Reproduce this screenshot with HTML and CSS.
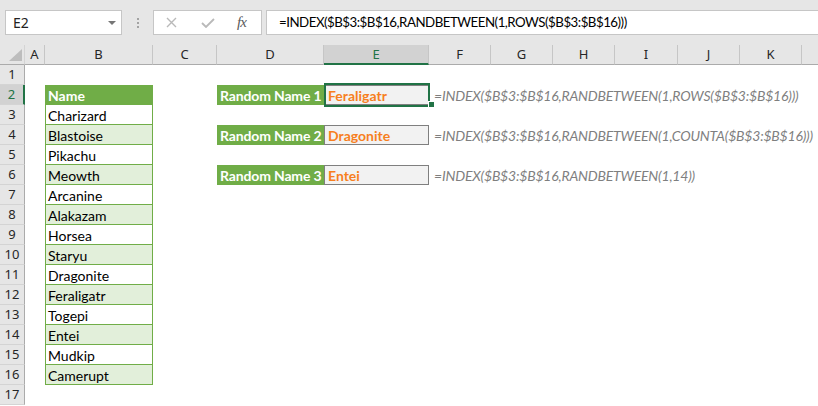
FILE: index.html
```html
<!DOCTYPE html>
<html>
<head>
<meta charset="utf-8">
<title>Random Name</title>
<link rel="stylesheet" href="styles.css">
</head>
<body>
<div class="toolbar">
  <div class="namebox"><span>E2</span><span class="dd"></span></div>
  <div class="grip"><i></i><i></i><i></i></div>
  <div class="fbtns">
    <svg class="ic-x" width="11" height="11" viewBox="0 0 11 11"><path d="M1 1L10 10M10 1L1 10" stroke="#b9b9b9" stroke-width="1.4" fill="none"/></svg>
    <svg class="ic-ok" width="14" height="10" viewBox="0 0 14 10"><path d="M1 5L5 9L13 1" stroke="#b9b9b9" stroke-width="1.8" fill="none"/></svg>
    <span class="ic-fx">fx</span>
  </div>
  <div class="fbar">=INDEX($B$3:$B$16,RANDBETWEEN(1,ROWS($B$3:$B$16)))</div>
</div>
<div class="sheet">
  <div class="row colhdr">
    <div class="corner"><svg width="13" height="12" viewBox="0 0 13 12"><path d="M13 0L13 12L0 12Z" fill="#bdbdbd"/></svg></div>
    <div class="ch">A</div><div class="ch">B</div><div class="ch">C</div><div class="ch">D</div><div class="ch sel">E</div><div class="ch">F</div><div class="ch">G</div><div class="ch">H</div><div class="ch">I</div><div class="ch">J</div><div class="ch">K</div><div class="ch last"></div>
  </div>
  <div class="row"><div class="rh">1</div></div>
  <div class="row"><div class="rh sel">2</div><div class="b hdr">Name</div><div class="d lbl">Random Name 1</div><div class="e out">Feraligatr<span class="selbox"></span><span class="handle"></span></div><div class="f">=INDEX($B$3:$B$16,RANDBETWEEN(1,ROWS($B$3:$B$16)))</div></div>
  <div class="row"><div class="rh">3</div><div class="b">Charizard</div></div>
  <div class="row"><div class="rh">4</div><div class="b alt">Blastoise</div><div class="d lbl">Random Name 2</div><div class="e out">Dragonite</div><div class="f">=INDEX($B$3:$B$16,RANDBETWEEN(1,COUNTA($B$3:$B$16)))</div></div>
  <div class="row"><div class="rh">5</div><div class="b">Pikachu</div></div>
  <div class="row"><div class="rh">6</div><div class="b alt">Meowth</div><div class="d lbl">Random Name 3</div><div class="e out">Entei</div><div class="f">=INDEX($B$3:$B$16,RANDBETWEEN(1,14))</div></div>
  <div class="row"><div class="rh">7</div><div class="b">Arcanine</div></div>
  <div class="row"><div class="rh">8</div><div class="b alt">Alakazam</div></div>
  <div class="row"><div class="rh">9</div><div class="b">Horsea</div></div>
  <div class="row"><div class="rh">10</div><div class="b alt">Staryu</div></div>
  <div class="row"><div class="rh">11</div><div class="b">Dragonite</div></div>
  <div class="row"><div class="rh">12</div><div class="b alt">Feraligatr</div></div>
  <div class="row"><div class="rh">13</div><div class="b">Togepi</div></div>
  <div class="row"><div class="rh">14</div><div class="b alt">Entei</div></div>
  <div class="row"><div class="rh">15</div><div class="b">Mudkip</div></div>
  <div class="row"><div class="rh">16</div><div class="b alt">Camerupt</div></div>
  <div class="row"><div class="rh">17</div></div>
</div>
</body>
</html>
```
FILE: styles.css
```css
html, body {
  margin: 0;
  padding: 0;
}
body {
  width: 818px;
  height: 406px;
  overflow: hidden;
  background: #ffffff;
  font-family: "Lato", "Liberation Sans", sans-serif;
}
.toolbar {
  display: flex;
  align-items: center;
  height: 45px;
  box-sizing: border-box;
  background: #e6e6e6;
  padding-left: 5px;
}
.namebox {
  width: 117px;
  height: 25px;
  box-sizing: border-box;
  border: 1px solid #c6c6c6;
  background: #ffffff;
  display: flex;
  align-items: center;
  justify-content: space-between;
  padding: 0 5px 0 7px;
  font-family: "Noto Sans", sans-serif;
  font-size: 14px;
  color: #222222;
}
.dd {
  width: 0;
  height: 0;
  border-left: 4px solid transparent;
  border-right: 4px solid transparent;
  border-top: 4px solid #767676;
}
.grip {
  width: 2px;
  margin: 0 14px 0 15px;
  display: flex;
  flex-direction: column;
  gap: 2px;
}
.grip i {
  display: block;
  width: 2px;
  height: 2px;
  background: #a3a3a3;
}
.fbtns {
  width: 109px;
  height: 25px;
  box-sizing: border-box;
  border: 1px solid #c6c6c6;
  background: #ffffff;
  display: flex;
  align-items: center;
}
.ic-x {
  margin-left: 12px;
}
.ic-ok {
  margin-left: 24px;
}
.ic-fx {
  margin-left: 22px;
  font-family: "Liberation Serif", serif;
  font-style: italic;
  font-size: 15px;
  color: #5a5a5a;
  letter-spacing: -1px;
}
.fbar {
  flex: 1;
  margin-left: 4px;
  height: 25px;
  box-sizing: border-box;
  border: 1px solid #c6c6c6;
  border-right: none;
  background: #ffffff;
  padding-left: 12px;
  font-family: "Lato", sans-serif;
  font-size: 13.3px;
  letter-spacing: -0.5px;
  line-height: 23px;
  color: #000000;
  white-space: nowrap;
}
.sheet {
  display: flex;
  flex-direction: column;
}
.row {
  display: grid;
  grid-template-columns: 25px 20px 108px 64px 107px 105px 62px 62px 62px 63px 62px 62px 16px;
  height: 20px;
}
.row > div {
  box-sizing: border-box;
  height: 20px;
}
.colhdr > div {
  background: #e6e6e6;
  border-right: 1px solid #c6c6c6;
  border-bottom: 1px solid #ababab;
  text-align: center;
  font-family: "Noto Sans", sans-serif;
  font-size: 13px;
  line-height: 19px;
  color: #262626;
}
.colhdr .corner {
  display: flex;
  align-items: flex-end;
  justify-content: flex-end;
  padding: 0 2px 3px 0;
  border-right: 1px solid #d4d4d4;
}
.colhdr .corner svg {
  display: block;
}
.colhdr .sel {
  background: #d2d2d2;
  border-bottom: 2px solid #217346;
  color: #217346;
}
.colhdr .last {
  border-right: none;
}
.rh {
  grid-column: 1;
  background: #e6e6e6;
  border-right: 1px solid #ababab;
  border-bottom: 1px solid #d4d4d4;
  text-align: center;
  font-family: "Noto Sans", sans-serif;
  font-size: 13px;
  line-height: 19px;
  color: #262626;
}
.rh.sel {
  background: #d2d2d2;
  border-right: 2px solid #217346;
  color: #217346;
}
.b, .d, .e, .f {
  font-size: 14px;
  padding-top: 2px;
  line-height: 18px;
  white-space: nowrap;
}
.b {
  grid-column: 3;
  border-left: 1px solid #70ad47;
  border-right: 1px solid #70ad47;
  border-bottom: 1px solid #70ad47;
  padding-left: 2px;
  color: #000000;
}
.b.alt {
  background: #e2efda;
}
.b.hdr {
  background: #70ad47;
  color: #ffffff;
  font-weight: bold;
}
.d.lbl {
  grid-column: 5;
  background: #70ad47;
  color: #ffffff;
  font-weight: bold;
  padding-left: 3px;
  letter-spacing: -0.15px;
  overflow: hidden;
}
.e {
  grid-column: 6;
  position: relative;
  background: #f2f2f2;
  border: 1px solid #7f7f7f;
  color: #f77f1e;
  font-weight: bold;
  padding-left: 3px;
  padding-top: 1px;
  line-height: 17px;
}
.selbox {
  position: absolute;
  left: -1px;
  top: -3px;
  right: -2px;
  bottom: -3px;
  border: 2px solid #217346;
}
.handle {
  position: absolute;
  right: -7px;
  bottom: -4px;
  width: 5px;
  height: 5px;
  background: #217346;
  border: 1px solid #ffffff;
  box-sizing: content-box;
}
.f {
  grid-column: 7 / span 7;
  font-style: italic;
  color: #7f7f7f;
  padding-left: 5px;
  letter-spacing: -0.2px;
}
```
